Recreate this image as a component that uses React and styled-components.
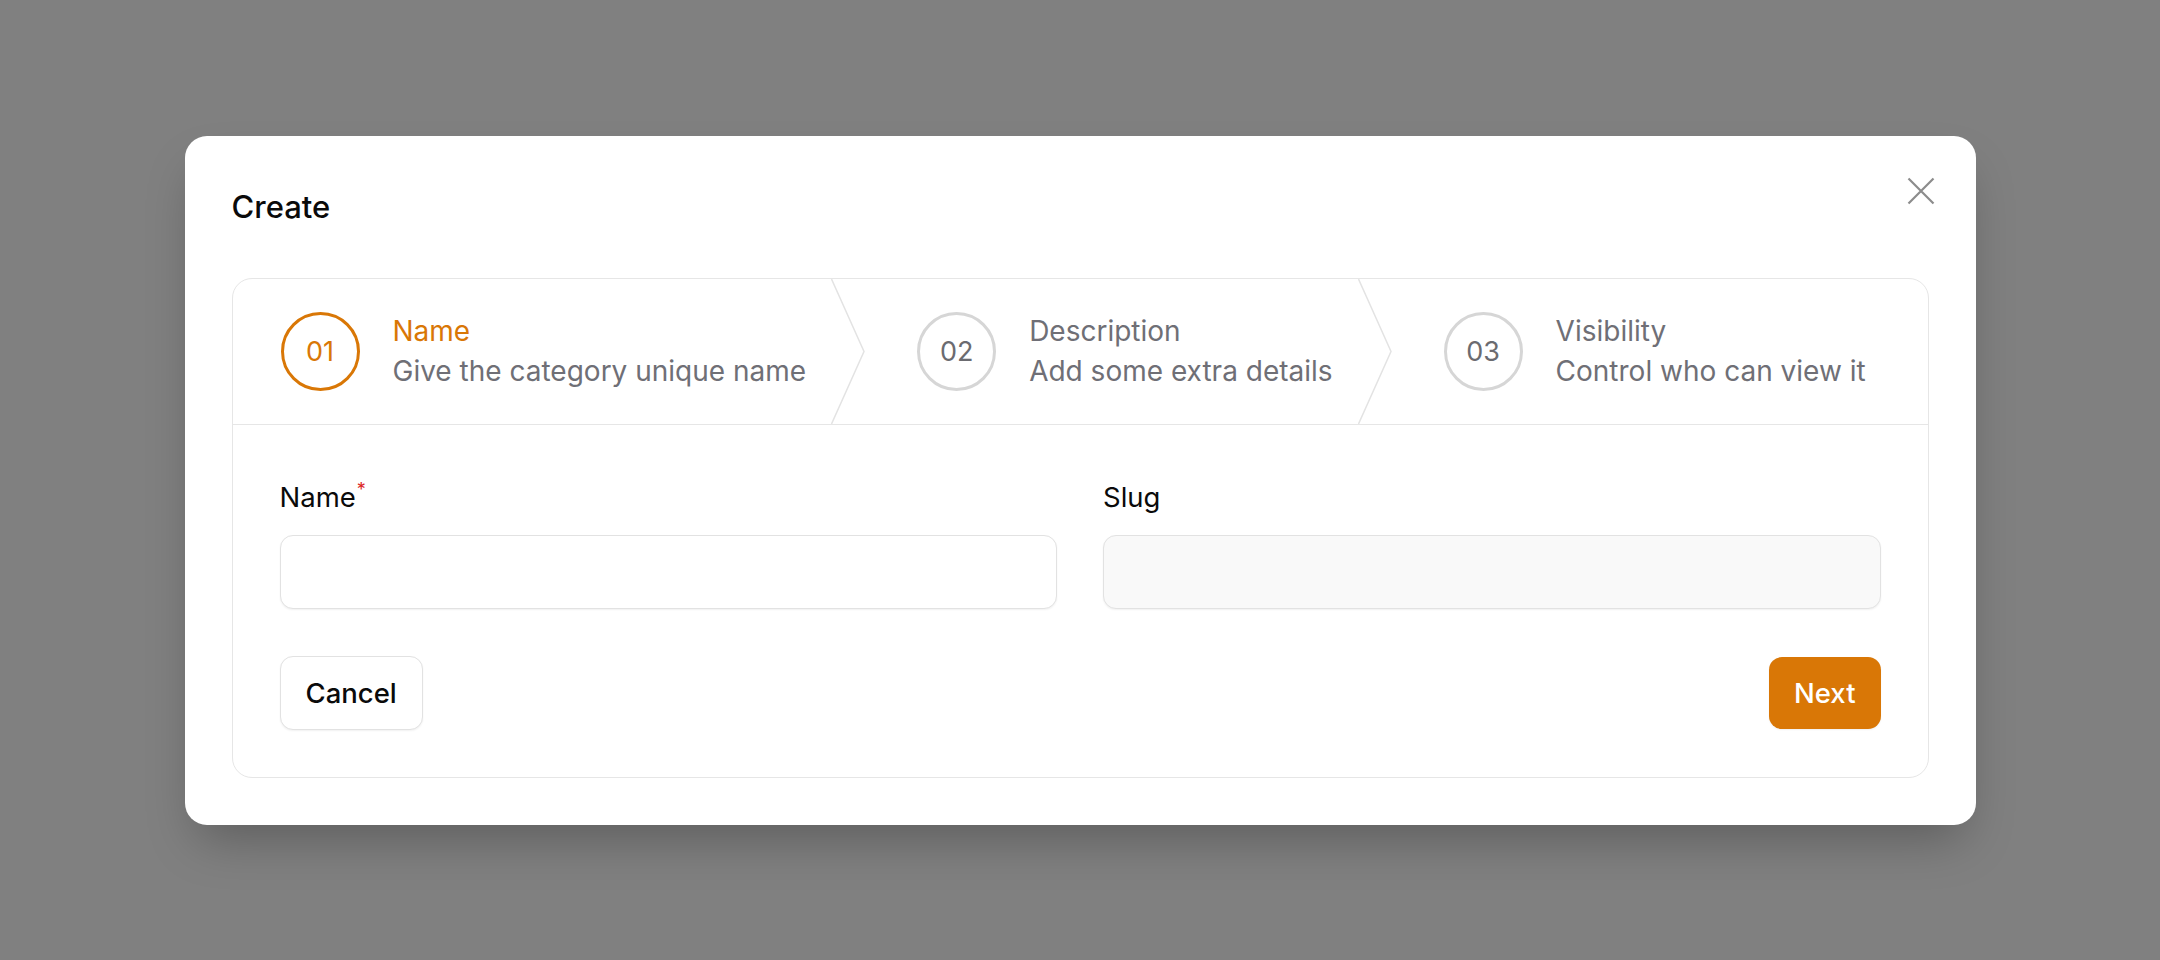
import styled, { createGlobalStyle } from "styled-components";

/* =======================
   Page + dialog shell
======================= */

const GlobalStyle = createGlobalStyle`
  * { box-sizing: border-box; }
  html, body {
    margin: 0;
    padding: 0;
    background: #808080;
    font-family: Inter, "Noto Sans", "Liberation Sans", sans-serif;
    -webkit-font-smoothing: antialiased;
  }
`;

const Backdrop = styled.div`
  width: 100vw;
  height: 960px;
  display: flex;
  align-items: center;
  justify-content: center;
  background: #808080;
`;

const Dialog = styled.div`
  position: relative;
  width: 1791px;
  padding: 48px 47px 47px;
  background: #ffffff;
  border-radius: 22px;
  box-shadow: 0 25px 50px -12px rgba(0, 0, 0, 0.28);
  display: flex;
  flex-direction: column;
  gap: 49px;
`;

const Title = styled.h2`
  margin: 0;
  font-size: 31px;
  line-height: 45px;
  font-weight: 500;
  color: #0a0a0a;
`;

const CloseButton = styled.button`
  position: absolute;
  top: 41px;
  right: 41px;
  width: 28px;
  height: 28px;
  padding: 0;
  border: none;
  background: none;
  cursor: pointer;
  color: #8c8c8c;
  display: flex;
`;

/* =======================
   Stepper card
======================= */

const Card = styled.div`
  border: 1px solid #e6e6e6;
  border-radius: 20px;
  overflow: hidden;
`;

const StepBar = styled.div`
  height: 146px;
  display: flex;
  align-items: stretch;
  border-bottom: 1.5px solid #e6e6e6;
`;

const Step = styled.div`
  display: flex;
  align-items: center;
  gap: 33px;
  padding: 0 25px 0 ${(p) => (p.$first ? "48px" : "52px")};
`;

const Circle = styled.div`
  width: 79px;
  height: 79px;
  flex-shrink: 0;
  border-radius: 50%;
  border: 3px solid ${(p) => (p.$active ? "#d97706" : "#d6d6d6")};
  color: ${(p) => (p.$active ? "#d97706" : "#6b6b70")};
  display: flex;
  align-items: center;
  justify-content: center;
  font-size: 27px;
  font-weight: 400;
`;

const StepText = styled.div`
  display: flex;
  flex-direction: column;
  font-size: 28px;
  line-height: 40px;
  color: #6f6f76;
  white-space: nowrap;
`;

const StepTitle = styled.span`
  color: ${(p) => (p.$active ? "#d97706" : "#6f6f76")};
`;

const Chevron = styled.svg`
  width: 34px;
  height: 100%;
  flex-shrink: 0;
  display: block;
`;

/* =======================
   Form
======================= */

const Form = styled.form`
  padding: 52px 47px 47px;
  display: flex;
  flex-direction: column;
  gap: 47px;
`;

const FieldRow = styled.div`
  display: grid;
  grid-template-columns: 1fr 1fr;
  gap: 46px;
`;

const Field = styled.label`
  display: flex;
  flex-direction: column;
  gap: 18px;
`;

const LabelText = styled.span`
  font-size: 27.5px;
  line-height: 40px;
  color: #0a0a0a;
`;

const Required = styled.sup`
  color: #dc2626;
  font-size: 18px;
  line-height: 0;
  margin-left: 1px;
`;

const Input = styled.input`
  height: 74px;
  width: 100%;
  padding: 0 20px;
  border: 1.5px solid #e2e2e2;
  border-radius: 13px;
  background: ${(p) => (p.disabled ? "#f9f9f9" : "#ffffff")};
  box-shadow: 0 1px 2px rgba(0, 0, 0, 0.06);
  font: inherit;
  font-size: 27.5px;
  outline: none;
`;

const Actions = styled.div`
  display: flex;
  justify-content: space-between;
  align-items: center;
`;

const Button = styled.button`
  height: ${(p) => (p.$primary ? "72px" : "74px")};
  padding: 0 ${(p) => (p.$primary ? "25px" : "25px")};
  border-radius: 13px;
  border: ${(p) => (p.$primary ? "none" : "1.5px solid #e2e2e2")};
  background: ${(p) => (p.$primary ? "#d97706" : "#ffffff")};
  color: ${(p) => (p.$primary ? "#ffffff" : "#0a0a0a")};
  box-shadow: 0 1px 2px rgba(0, 0, 0, 0.06);
  font-family: inherit;
  font-size: 27.5px;
  font-weight: 500;
  cursor: pointer;
`;

const steps = [
  { num: "01", title: "Name", sub: "Give the category unique name" },
  { num: "02", title: "Description", sub: "Add some extra details" },
  { num: "03", title: "Visibility", sub: "Control who can view it" },
];

export default function App() {
  const current = 0;
  return (
    <>
      <GlobalStyle />
      <Backdrop>
        <Dialog>
          <Title>Create</Title>
          <CloseButton aria-label="Close">
            <svg width="28" height="28" viewBox="0 0 28 28" fill="none">
              <path d="M1.5 1.5 26.5 26.5M26.5 1.5 1.5 26.5" stroke="currentColor" strokeWidth="2.2" />
            </svg>
          </CloseButton>

          <Card>
            <StepBar>
              {steps.map((s, i) => (
                <StepGroup key={s.num} step={s} index={i} active={i === current} last={i === steps.length - 1} />
              ))}
            </StepBar>

            <Form onSubmit={(e) => e.preventDefault()}>
              <FieldRow>
                <Field>
                  <LabelText>
                    Name<Required>*</Required>
                  </LabelText>
                  <Input type="text" />
                </Field>
                <Field>
                  <LabelText>Slug</LabelText>
                  <Input type="text" disabled />
                </Field>
              </FieldRow>
              <Actions>
                <Button type="button">Cancel</Button>
                <Button type="submit" $primary>Next</Button>
              </Actions>
            </Form>
          </Card>
        </Dialog>
      </Backdrop>
    </>
  );
}

function StepGroup({ step, index, active, last }) {
  return (
    <>
      <Step $first={index === 0}>
        <Circle $active={active}>{step.num}</Circle>
        <StepText>
          <StepTitle $active={active}>{step.title}</StepTitle>
          <span>{step.sub}</span>
        </StepText>
      </Step>
      {!last && (
        <Chevron viewBox="0 0 34 146" preserveAspectRatio="none">
          <polyline points="0.5,0 33,73 0.5,146" fill="none" stroke="#e3e3e3" strokeWidth="1.5" />
        </Chevron>
      )}
    </>
  );
}
